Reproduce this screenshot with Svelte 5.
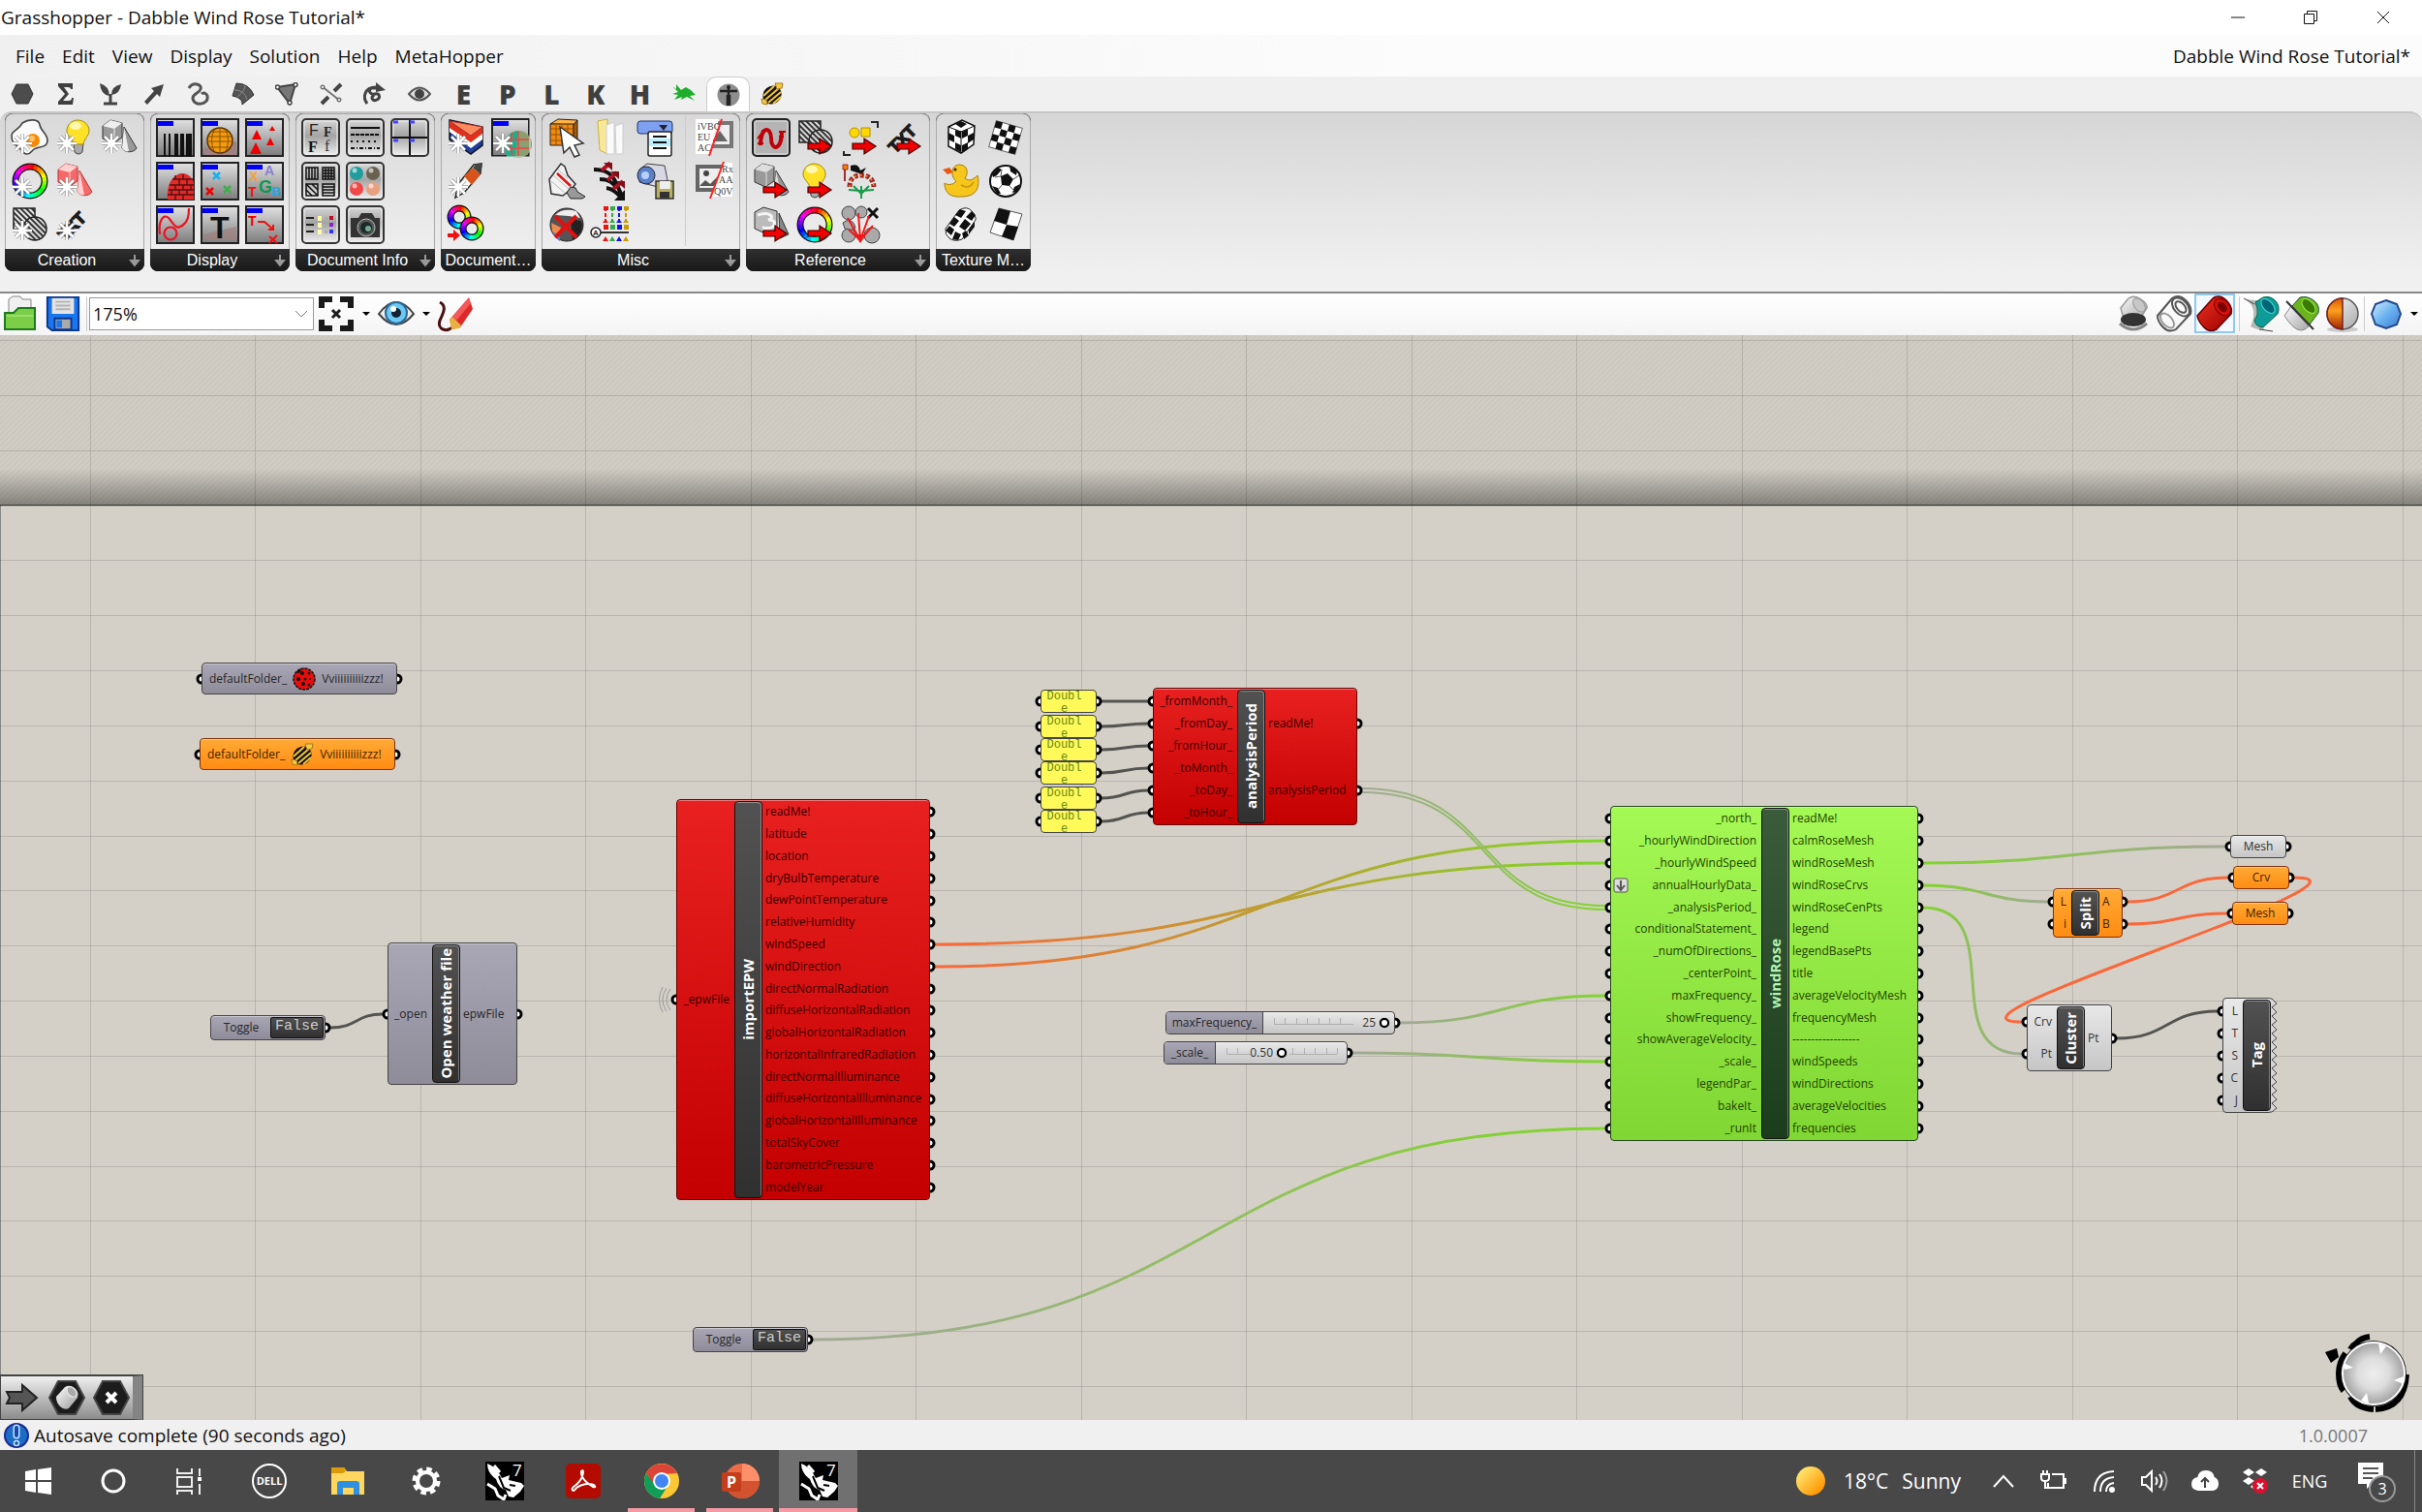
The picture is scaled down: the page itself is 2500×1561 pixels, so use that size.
<script>
	const tabs = [
		'hex', 'sigma', 'plant', 'arrow', 'curve', 'surface', 'mesh', 'intersect', 'transform', 'eye',
		'E', 'P', 'L', 'K', 'H', 'hopper', 'man', 'bee'
	];
	const menus = ['File', 'Edit', 'View', 'Display', 'Solution', 'Help', 'MetaHopper'];

	// shared bits of the ribbon icons, all on a 40 x 40 grid
	const sparkRays = 'M12 16v20M2 26h20M5 19l14 14M19 19L5 33';
	const spark = `<path d="${sparkRays}" stroke="#555" stroke-width="4" opacity=".6"/><path d="${sparkRays}" stroke="#fff" stroke-width="2.6"/>`;
	const redArrow =
		'<path d="M12 26h12v-5l12 8-12 8v-5H12z" fill="#f00000" stroke="#400" stroke-width="1.2"/>';
	const frame =
		'<rect x="1" y="1" width="38" height="38" fill="url(#gFrame)" stroke="#222" stroke-width="2"/><rect x="2" y="3" width="16" height="5" fill="#0000f8"/>';
	const round =
		'<rect x="1" y="1" width="38" height="38" rx="4" fill="url(#gRound)" stroke="#333" stroke-width="2"/><rect x="3" y="3" width="34" height="34" rx="2" fill="none" stroke="#eee"/>';

	function solids(light, mid, dark) {
		return `<path d="M25 9l13 22c-3 5-12 5-15 0z" fill="${mid}" stroke="${dark}"/><path d="M25 9l-2 22c2 3 5 4 7 3z" fill="${light}"/><path d="M3 8l8-6 12 3v15l-9 6-11-5z" fill="${mid}" stroke="${dark}"/><path d="M3 8l8-6 12 3-8 6z" fill="${light}"/><path d="M15 11v14" stroke="${light}"/>`;
	}

	function ring(cx, cy, r) {
		let out = `<circle cx="${cx}" cy="${cy}" r="${r}" fill="none" stroke="#111" stroke-width="7"/>`;
		for (let a = 0; a < 360; a += 15) {
			const p = [a, a + 17].map((d) => {
				const t = (d * Math.PI) / 180;
				return `${(cx + r * Math.sin(t)).toFixed(2)} ${(cy - r * Math.cos(t)).toFixed(2)}`;
			});
			out += `<path d="M${p[0]}A${r} ${r} 0 0 1 ${p[1]}" fill="none" stroke="hsl(${a},100%,50%)" stroke-width="4.4"/>`;
		}
		return out;
	}

	function txt(x, y, size, color, s, extra = '') {
		return `<text x="${x}" y="${y}" font-size="${size}" fill="${color}" ${extra}>${s}</text>`;
	}

	const bold = 'font-weight="bold" font-family="Liberation Sans"';
	const serif = 'font-family="Liberation Serif"';
	const bulb =
		'<path d="M14 26h10l-1 9q-4 4-8 0z" fill="#aaa" stroke="#444"/><path d="M18 2c7 0 12 5 12 11 0 5-5 8-6 14H14C13 21 7 18 7 13 7 7 12 2 18 2z" fill="#ffe227" stroke="#a08a10"/><ellipse cx="16" cy="8" rx="6" ry="4" fill="#fff8b0"/>';
	const hatch =
		'<path d="M3 3h22v22H3z" fill="url(#hatch)" stroke="#222" stroke-width="1.5"/><circle cx="25" cy="24" r="12" fill="#ddd"/><circle cx="25" cy="24" r="12" fill="url(#hatch)" stroke="#222" stroke-width="1.5"/>';
	const textIcon = `<g transform="rotate(-45 20 20)">${txt(1, 25, 17, '#1a1a1a', 'TXT', 'stroke="#1a1a1a" stroke-width="1.4" ' + bold)}</g>`;
	const soccer =
		'<circle cx="20" cy="20" r="16" fill="#fff" stroke="#111" stroke-width="2"/><path d="M15 15l7-3 6 6-4 7-8-1zM6 13l6-7 4 2-5 6-4 2zM24 4l8 5-1 5-6-4zM35 23l-3 8-5 1 2-6zM6 25l6 2 3 6-4 0z" fill="#111"/><path d="M16 8l-1 7M28 18l6-4M24 25l5 5M16 24l-4 5M15 15l-6 1" stroke="#555"/>';

	const icons = {
		egg: `<path d="M12 5c6-4 17-5 18 2 1 6 8 9 8 16 0 9-12 5-16 11-5 6-9 2-12-2-5-5-9-6-9-14 0-5 8-6 11-13z" fill="#fafafa" stroke="#444" stroke-width="1.6"/><circle cx="23" cy="23" r="7" fill="#f58a08"/><circle cx="22" cy="21" r="3" fill="#ffc46a"/>${spark}`,
		bulb: `<g transform="translate(5 0)">${bulb}</g>${spark}`,
		solids: solids('#eee', '#999', '#333') + spark,
		wheel: ring(20, 20, 15) + spark,
		redSolids: solids('#ffd0d0', '#f46a6a', '#b33') + spark,
		hatch: hatch + spark,
		text: textIcon + spark,
		bars: frame + '<path d="M9 16v24M14 16v24" stroke="#111" stroke-width="2"/><path d="M21 16v24M27 16v24" stroke="#111" stroke-width="4"/><path d="M34 16v24" stroke="#111" stroke-width="6"/>',
		globe: frame + '<path d="M3 32l34-8v14H5z" fill="#a08080"/><circle cx="20" cy="23" r="13" fill="#f29a10" stroke="#5a3300" stroke-width="1.5"/><path d="M8 19h24M7 24h26M10 30h20M20 10v26M14 12q-5 11 0 22M26 12q5 11 0 22M11 14h18" stroke="#8a5200" fill="none"/>',
		triangles: frame + '<path d="M12 12l5 10H7zM28 8l3 5h-6zM26 20l4 8h-8zM11 25l6 12H5z" fill="#e00"/>',
		brick: frame + '<path d="M12 39c-2-18 8-27 15-27 7 0 11 6 12 10v17z" fill="#e22a2a"/><path d="M14 24h25M13 29h26M12 34h27M17 18h22M20 14v4M28 13v5M24 18v6M32 18v6M20 24v5M28 24v5M36 24v5M16 29v5M24 29v5M32 29v5M20 34v5M28 34v5" stroke="#511" stroke-width="1.4"/>',
		crosses: frame + '<g fill="none" stroke-width="2.5"><path d="M13 11l7 7M20 11l-7 7" stroke="#1ab0f0"/><path d="M6 27l7 7M13 27l-7 7" stroke="#e00"/><path d="M24 25l7 7M31 25l-7 7" stroke="#3cb04c"/></g>',
		letters: frame + txt(4, 20, 14, '#f0a040', 'X', bold) + txt(20, 14, 14, '#8a80d0', 'A', bold) + txt(14, 32, 18, '#0a9850', 'G', bold) + txt(3, 36, 14, '#e11', 'T', bold) + txt(27, 35, 13, '#20a8e8', 'B', bold),
		loops: frame + '<path d="M4 30C2 16 8 8 13 13c5 5 7 13 14 8 6-4 7-10 7-18" stroke="#e12" stroke-width="2.2" fill="none"/><circle cx="15" cy="29" r="6.5" stroke="#e12" stroke-width="2.2" fill="none"/>',
		bigT: frame + '<path d="M3 30l34-8v14H5z" fill="#a08080" opacity=".7"/>' + txt(10, 34, 32, '#111', 'T', bold),
		tagX: frame + txt(3, 21, 14, '#e00', 'T', bold) + '<path d="M13 17h7l8 7M25 32l8 7M33 31l-8 8M29 20v5h-5" stroke="#e11" stroke-width="2" fill="none"/>',
		fonts: round + txt(8, 18, 16, '#222', 'F', 'font-family="Liberation Sans"') + txt(23, 19, 14, '#222', 'F', serif + ' font-weight="bold"') + txt(7, 35, 16, '#111', 'F', serif + ' font-weight="bold"') + txt(24, 34, 16, '#333', 'f', serif),
		lines: round + '<g stroke="#111" stroke-width="2"><path d="M5 10h30"/><path d="M5 17h30" stroke-dasharray="4 1"/><path d="M5 24h30" stroke-dasharray="2 4"/><path d="M5 31h30" stroke-dasharray="4 2 1 2"/></g>',
		cross: round + '<path d="M20 2v36M2 20h36" stroke="#111" stroke-width="2"/><path d="M3 4h5M20 4h5M3 23h5M20 23h5" stroke="#44f" stroke-width="3"/>',
		patterns: round + '<g stroke="#111" stroke-width="1.5" fill="none"><path d="M5 6h12v12H5zM22 6h12v12H22zM5 23h12v12H5zM22 23h12v12H22z"/><path d="M8 6v12M11 6v12M14 6v12M25 6v12M28 6v12M31 6v12M22 9h12M22 12h12M22 15h12M22 26h12M22 29h12M22 32h12M5 29l6 6M5 23l12 12M11 23l6 6"/></g>',
		spheres: round + '<circle cx="11" cy="12" r="7" fill="#1f9c9c"/><circle cx="28" cy="12" r="7" fill="#6a6250"/><circle cx="11" cy="28" r="7" fill="#f04848"/><circle cx="28" cy="28" r="7" fill="#e8a080"/><g fill="#fff" opacity=".6"><circle cx="9" cy="9" r="2.5"/><circle cx="26" cy="9" r="2.5"/><circle cx="9" cy="25" r="2.5"/><circle cx="26" cy="25" r="2.5"/></g>',
		layers: round + '<path d="M5 13h8M5 20h8M5 27h8" stroke="#222" stroke-width="2"/><path d="M17 11h4v5h-4zM17 18h4v5h-4zM17 25h4v5h-4z" fill="#fffca8"/><path d="M24 12h3v3h-3zM24 19h3v3h-3zM24 26h3v3h-3z" fill="#aaa"/><path d="M29 11h4v4h-4z" fill="#b12"/><path d="M29 18h4v4h-4z" fill="#82c"/><path d="M29 25h4v4h-4z" fill="#33f"/>',
		camera: round + '<path d="M5 13h8l3-5h11l3 5h5v20H5z" fill="#333"/><circle cx="21" cy="23" r="9" fill="#555" stroke="#bbb"/><circle cx="21" cy="23" r="6" fill="#1a2a2a"/><circle cx="23" cy="24" r="3" fill="#78a890"/>',
		cake: '<path d="M3 2v20l22 15 12-9V9z" fill="#1f3f98" stroke="#112" stroke-width="1.5"/><path d="M3 14l22 17 12-9v-7L25 24 3 8z" fill="#fff"/><path d="M3 3v7l22 15 12-9V9l-12 9z" fill="#e0301c"/><path d="M3 3l34 6-12 9z" fill="#ff8a5c" stroke="#a33"/>' + spark,
		frameSphere: frame + '<circle cx="28" cy="27" r="14" fill="#8aa070"/><path d="M14 30c0-10 6-16 14-17l-3 27H16z" fill="#1fae8c"/><path d="M16 22h23M28 13v26M22 15q-4 12 0 24M15 31h24" stroke="#e44" fill="none" stroke-width="1.5"/>' + '<path d="M40 0v40H0" stroke="#ddd" stroke-width="1"/>' + spark,
		pencil: '<path d="M9 37l3-14L28 3l8-1-1 10-17 20z" fill="#fff" stroke="#222" stroke-width="1.500"/><path d="M18 15l9-9 8 7-9 11z" fill="#d8541a"/><path d="M27 6l4-4 6-1-2 12z" fill="#444"/>' + spark,
		rings: ring(13, 12, 9) + ring(26, 24, 9) + '<path d="M1 29h6v-4l7 6-7 6v-4H1z" fill="#f01010"/>',
		pick: '<path d="M3 6l8-5 20 1-4 5z" fill="#ffb347" stroke="#222"/><path d="M3 6h24v22H3z" fill="#f08a10" stroke="#222"/><path d="M27 7l4-5v22l-4 4z" fill="#a85a00" stroke="#222"/><path d="M3 11h24M3 17h24M3 23h24M9 6v22M15 6v22M21 6v22" stroke="#9a5200"/><path d="M13 9l24 17-9 2 5 10-5 2-5-10-6 6z" fill="#fff" stroke="#333" stroke-width="1.5"/>',
		folder: '<path d="M6 3l10-2v36l-8-4z" fill="#f8e898" stroke="#c8b040"/><path d="M15 7l8-3v33h-8zM24 8l8-3v32h-7z" fill="#fafafa" stroke="#ccc"/>',
		script: '<rect x="1" y="3" width="36" height="13" rx="3" fill="#7ea0f0" stroke="#236"/><rect x="12" y="14" width="24" height="25" rx="2" fill="#fff" stroke="#222" stroke-width="1.5"/><path d="M13 21h22v8H13z" fill="#b8f0ff"/><path d="M17 19h14M17 25h14M17 31h14" stroke="#111" stroke-width="2"/><path d="M23 7h9l-4 6z" fill="#223"/>',
		codeA: '<path d="M13 5h24v24H13z" fill="#eee" stroke="#777" stroke-width="4"/><path d="M17 24l8-11 8 11z" fill="#666"/><path d="M0 1h24L14 37H0z" fill="#fff"/>' + txt(2, 12, 10, '#444', 'iVBC', serif) + txt(2, 23, 10, '#444', 'EU', serif) + txt(2, 34, 10, '#444', 'AC', serif) + '<path d="M27 1L14 39" stroke="#f22" stroke-width="2"/>',
		paper: '<path d="M2 18L14 2l4 3 3 9 8 9-4 5-9 7-12-2z" fill="#f2f2f2" stroke="#333" stroke-width="1.5"/><path d="M6 14l16 14M4 20l14 12M11 8l10 9" stroke="#bbb"/><path d="M10 12l14 13" stroke="#d11" stroke-width="2.5"/><path d="M20 32l4-6 5 1 2 4 8 5-3 2H24z" fill="#999" stroke="#222"/>',
		branch: '<path d="M2 8c12 0 18 4 22 12s5 12 8 17M8 18c10 0 14 4 17 9M15 27q8 1 16 11" stroke="#111" stroke-width="4" fill="none"/><path d="M10 9l9-8M16 19l10-8M22 28l10-8" stroke="#b01020" stroke-width="4"/><path d="M12 1h9v8zM19 10h9v8zM25 20h9v8z" fill="#801018"/><path d="M34 29v11H23z" fill="#111"/>',
		photo: '<path d="M3 8l8-6 18 2 3 15-10 7-19-5z" fill="#d8d8e4" stroke="#444"/><circle cx="10" cy="14" r="9" fill="#5a80c8" stroke="#223"/><circle cx="9" cy="14" r="4" fill="#b8d0ff"/><path d="M20 20h18v18H20z" fill="#b8b060" stroke="#333" stroke-width="1.5"/><path d="M24 20h11v8H24z" fill="#eee"/><path d="M24 31h10v7H24z" fill="#333"/>',
		codeB: '<path d="M2 5h26v24H2z" fill="#eee" stroke="#666" stroke-width="4"/><path d="M4 25l6-6 5 4 8-8v10z" fill="#555"/><circle cx="11" cy="12" r="3" fill="#444"/><path d="M28 1h10v35H16z" fill="#fff"/>' + txt(27, 11, 10, '#444', 'Rx', serif) + txt(24, 22, 10, '#444', 'AA', serif) + txt(19, 34, 10, '#444', 'Q0V', serif) + '<path d="M29 0L15 38" stroke="#f22" stroke-width="2"/>',
		ballX: '<circle cx="20" cy="20" r="17" fill="#555" stroke="#222"/><path d="M8 10q8-8 22-4l4 7-12-2z" fill="#eee"/><path d="M24 14l11 2q4 12-9 20z" fill="#222"/><path d="M4 18l10 5-3 9-6-5z" fill="#f08a50"/><path d="M5 27l8 6 0 4q-6-4-8-10z" fill="#4a80d0"/><path d="M8 11l22 22M30 11L8 33" stroke="#e01010" stroke-width="4"/>',
		ruler: '<g stroke-width="2" fill="none"><path d="M14 2v16" stroke="#e11" stroke-dasharray="4 2"/><path d="M21 2v16" stroke="#3a4" stroke-dasharray="4 2"/><path d="M28 2v16" stroke="#11e" stroke-dasharray="4 2"/><path d="M35 2v16" stroke="#c90" stroke-dasharray="4 2"/></g><path d="M12 1h5v4h-5zM12 20h5v5h-5zM14 32l3 5h-6zM14 14l3 4h-6z" fill="#e11"/><path d="M19 1h5v4h-5zM19 20h5v5h-5zM21 32l3 5h-6zM21 14l3 4h-6z" fill="#3a4"/><path d="M26 1h5v4h-5zM26 20h5v5h-5zM28 32l3 5h-6zM28 14l3 4h-6z" fill="#11e"/><path d="M33 1h5v4h-5zM33 20h5v5h-5zM35 32l3 5h-6zM35 14l3 4h-6z" fill="#c90"/><path d="M8 28h30" stroke="#333" stroke-width="2"/><circle cx="4" cy="28" r="5" fill="#fff" stroke="#222" stroke-width="1.5"/>' + txt(1, 31, 8, '#222', 'A', bold),
		snake: '<rect x="1" y="1" width="38" height="38" rx="4" fill="#b4b4b4" stroke="#222" stroke-width="2"/><rect x="3" y="3" width="34" height="34" rx="2" fill="none" stroke="#ddd"/><path d="M9 28c0-20 11-20 11-7s11 13 11-8" stroke="#c00008" stroke-width="4" fill="none"/><path d="M6 21l3-4M6 26h6M28 14h7M33 19h-5M10 13h5" stroke="#c00008" stroke-width="2"/>',
		hatchRef: hatch + redArrow,
		dotsRef: '<path d="M31 4h7v6M3 34v4h7" stroke="#222" stroke-width="2" fill="none"/><circle cx="14" cy="15" r="5" fill="#ffd800" stroke="#b09000"/><path d="M21 10h9v9h-9z" fill="#ffd800" stroke="#b09000"/>' + redArrow,
		textRef: textIcon + redArrow,
		solidsRef: solids('#ddd', '#999', '#333') + redArrow,
		bulbRef: bulb + redArrow,
		tree: '<path d="M4 6v14" stroke="#933" stroke-width="2"/><path d="M2 3h5v5H2z" fill="#e80" stroke="#a22"/><path d="M10 4q8-3 10 5l6-3-4 7-12-4z" fill="#111"/><path d="M21 38V25M21 33l-8-8M21 33l8-8M21 30l-13-1M21 30l13-1" stroke="#1a9a4a" stroke-width="2"/><path d="M9 26q0-12 12-12t13 12" fill="none" stroke="#a02020" stroke-width="5" stroke-dasharray="4 2"/><path d="M9 26q0-12 12-12t13 12" fill="none" stroke="#f0a020" stroke-width="1.5" stroke-dasharray="2 4"/>',
		clayRef: '<path d="M28 8l10 22-9 4z" fill="#888" stroke="#333"/><path d="M3 7l9-5 14 4v18l-10 6-13-6z" fill="#bbb" stroke="#333"/><path d="M6 10q9-3 13 0t-2 5q8 0 6 5t-12 3" fill="none" stroke="#f4f4f4" stroke-width="3"/>' + redArrow,
		wheelRef: ring(19, 20, 15) + redArrow,
		burst: '<g fill="#aaa" stroke="#444"><circle cx="8" cy="8" r="7"/><circle cx="32" cy="31" r="8"/><circle cx="8" cy="31" r="7"/><circle cx="21" cy="7" r="6"/><path d="M2 18q8-6 12 2t-10 4z"/></g><path d="M28 3l10 10M38 3L28 13" stroke="#111" stroke-width="3"/><path d="M20 36L7 13M20 36l-2-28M20 36l9-25M20 36l13-15M20 36L8 25" stroke="#f01818" stroke-width="2" fill="none"/><path d="M14 30h12l-6 9z" fill="#f01818"/>',
		cubeTex: '<path d="M7 9l14-7 13 6-1 19-13 9L7 29z" fill="#fff" stroke="#111" stroke-width="1.5"/><path d="M20 13v23M7 9l13 5 14-6" stroke="#111"/><path d="M14 6l6-3 6 3-6 4zM7 15l6 3v7l-6-3zM14 12l6 2v7l-6-3zM21 14l6-3v7l-6 3zM27 18l6-3v7l-6 4zM14 25l6 3v7l-6-3zM21 28l6-3v7l-6 4z" fill="#111"/>',
		planeTex: '<g transform="rotate(16 20 20)"><rect x="6" y="6" width="28" height="28" fill="#fff" stroke="#666"/><path d="M6 6h7v7H6zM20 6h7v7h-7zM13 13h7v7h-7zM27 13h7v7h-7zM6 20h7v7H6zM20 20h7v7h-7zM13 27h7v7h-7zM27 27h7v7h-7z" fill="#111"/></g>',
		duck: '<path d="M3 22c4 3 10 1 12-2-5-3-7-16 3-17 9 0 10 9 6 14 5 4 9 1 13-3 3 12-1 22-16 22C10 37 3 33 3 22z" fill="#f6c61c" stroke="#a87e08"/><path d="M1 8l7-2 4 5-6 2z" fill="#e85a10"/><circle cx="14" cy="8" r="1.5" fill="#222"/><path d="M20 24q8 5 13-3" stroke="#c89808" fill="none" stroke-width="1.5"/>',
		soccer,
		cylTex: '<path d="M4 24L18 5q8-5 13 1t4 9L21 35q-8 3-13-1t-4-10z" fill="#fff" stroke="#222"/><path d="M14 10l5-6 6 2-5 7zM25 12l6-6 4 4-4 6zM8 19l5-7 5 4-5 6zM18 22l6-8 6 5-6 7zM4 26l4-5 5 4-3 6zM28 25l6-8v5l-6 8zM11 35l3-8 6 3-3 6zM21 29l4-3 3 5-5 4z" fill="#111"/>',
		cornerTex: '<path d="M13 3l24 6-9 27-24-8z" fill="#fff" stroke="#555"/><path d="M13 3l12 3-4 14-13-4zM21 20l12 2-5 14-12-4z" fill="#111"/>'
	};

	const panels = [
		{ name: 'Creation', more: true, groups: [{ cols: 3, items: ['egg', 'bulb', 'solids', 'wheel', 'redSolids', null, 'hatch', 'text'] }] },
		{ name: 'Display', more: true, groups: [{ cols: 3, items: ['bars', 'globe', 'triangles', 'brick', 'crosses', 'letters', 'loops', 'bigT', 'tagX'] }] },
		{ name: 'Document Info', more: true, groups: [{ cols: 3, items: ['fonts', 'lines', 'cross', 'patterns', 'spheres', null, 'layers', 'camera'] }] },
		{ name: 'Document…', groups: [{ cols: 2, items: ['cake', 'frameSphere', 'pencil', null, 'rings'] }] },
		{ name: 'Misc', more: true, groups: [
			{ cols: 3, items: ['pick', 'folder', 'script', 'paper', 'branch', 'photo', 'ballX', 'ruler'] },
			{ cols: 1, items: ['codeA', 'codeB'] }
		] },
		{ name: 'Reference', more: true, groups: [{ cols: 4, items: ['snake', 'hatchRef', 'dotsRef', 'textRef', 'solidsRef', 'bulbRef', 'tree', null, 'clayRef', 'wheelRef', 'burst'] }] },
		{ name: 'Texture M…', groups: [{ cols: 2, items: ['cubeTex', 'planeTex', 'duck', 'soccer', 'cylTex', 'cornerTex'] }] }
	];

	// components on the canvas
	const components = [
		{ id: 'open', name: 'Open weather file', color: 'grey', x: 400, y: 627, w: 134, h: 147, l: 44, ins: ['_open'], outs: ['epwFile'] },
		{
			id: 'epw', name: 'importEPW', color: 'red', x: 698, y: 479, w: 262, h: 414, l: 58,
			ins: ['_epwFile'],
			outs: [
				'readMe!', 'latitude', 'location', 'dryBulbTemperature', 'dewPointTemperature', 'relativeHumidity',
				'windSpeed', 'windDirection', 'directNormalRadiation', 'diffuseHorizontalRadiation',
				'globalHorizontalRadiation', 'horizontalInfraredRadiation', 'directNormalIlluminance',
				'diffuseHorizontalIlluminance', 'globalHorizontalIlluminance', 'totalSkyCover',
				'barometricPressure', 'modelYear'
			]
		},
		{
			id: 'period', name: 'analysisPeriod', color: 'red', x: 1190, y: 364, w: 211, h: 142, l: 85,
			ins: ['_fromMonth_', '_fromDay_', '_fromHour_', '_toMonth_', '_toDay_', '_toHour_'],
			outs: ['readMe!', 'analysisPeriod']
		},
		{
			id: 'rose', name: 'windRose', color: 'green', x: 1662, y: 486, w: 318, h: 346, l: 154, flatten: 3,
			ins: [
				'_north_', '_hourlyWindDirection', '_hourlyWindSpeed', 'annualHourlyData_', '_analysisPeriod_',
				'conditionalStatement_', '_numOfDirections_', '_centerPoint_', 'maxFrequency_', 'showFrequency_',
				'showAverageVelocity_', '_scale_', 'legendPar_', 'bakeIt_', '_runIt'
			],
			outs: [
				'readMe!', 'calmRoseMesh', 'windRoseMesh', 'windRoseCrvs', 'windRoseCenPts', 'legend',
				'legendBasePts', 'title', 'averageVelocityMesh', 'frequencyMesh', '------------------',
				'windSpeeds', 'windDirections', 'averageVelocities', 'frequencies'
			]
		},
		{ id: 'split', name: 'Split', color: 'orange', x: 2119, y: 571, w: 72, h: 51, l: 17, ins: ['L', 'i'], outs: ['A', 'B'] },
		{ id: 'cluster', name: 'Cluster', color: 'light', x: 2092, y: 691, w: 88, h: 69, l: 29, ins: ['Crv', 'Pt'], outs: ['Pt'] },
		{ id: 'tag', name: 'Tag', color: 'light', x: 2294, y: 684, w: 52, h: 119, l: 19, ragged: true, ins: ['L', 'T', 'S', 'C', 'J'], outs: [] }
	];

	const folders = [
		{ id: 'ladybug', color: 'grey', x: 208, y: 338, w: 202, h: 33 },
		{ id: 'honeybee', color: 'orange', x: 206, y: 416, w: 202, h: 33 }
	];

	const toggles = [
		{ id: 'toggleOpen', x: 217, y: 702, w: 119, h: 26 },
		{ id: 'toggleRun', x: 715, y: 1024, w: 119, h: 26 }
	];

	const params = [
		{ id: 'mesh1', name: 'Mesh', color: 'light', x: 2302, y: 516, w: 58, h: 24 },
		{ id: 'crv', name: 'Crv', color: 'orange', x: 2305, y: 548, w: 58, h: 24 },
		{ id: 'mesh2', name: 'Mesh', color: 'orange', x: 2304, y: 585, w: 58, h: 24 }
	];

	const sliders = [
		{ id: 'freq', name: 'maxFrequency_', x: 1203, y: 698, w: 237, h: 24, l: 100, min: 0, max: 25, step: 1, value: 25, text: '25' },
		{ id: 'scale', name: '_scale_', x: 1201, y: 729, w: 190, h: 24, l: 53, min: 0, max: 1, step: 0.01, value: 0.5, text: '0.50' }
	];

	const yellow = [366, 392, 416, 440, 466, 490].map((y, i) => ({ id: 'panel' + i, x: 1074, y, w: 58, h: 24 }));

	const ORANGE = '#fa683a';
	const GREEN = '#80d628';
	const FAINT = '#a2a898';
	const DARK = '#545450';

	const wires = [
		{ from: ['toggleOpen', 0], to: ['open', 0], a: DARK, b: DARK },
		...yellow.map((p, i) => ({ from: [p.id, 0], to: ['period', i], a: DARK, b: DARK })),
		{ from: ['epw', 6], to: ['rose', 2], a: ORANGE, b: GREEN },
		{ from: ['epw', 7], to: ['rose', 1], a: ORANGE, b: GREEN },
		{ from: ['period', 1], to: ['rose', 4], a: FAINT, b: GREEN, double: true },
		{ from: ['freq', 0], to: ['rose', 8], a: FAINT, b: GREEN },
		{ from: ['scale', 0], to: ['rose', 11], a: FAINT, b: GREEN },
		{ from: ['toggleRun', 0], to: ['rose', 14], a: FAINT, b: GREEN },
		{ from: ['rose', 2], to: ['mesh1', 0], a: GREEN, b: FAINT },
		{ from: ['rose', 3], to: ['split', 0], a: GREEN, b: FAINT },
		{ from: ['rose', 4], to: ['cluster', 1], a: GREEN, b: FAINT },
		{ from: ['split', 0], to: ['crv', 0], a: ORANGE, b: ORANGE },
		{ from: ['split', 1], to: ['mesh2', 0], a: ORANGE, b: ORANGE },
		{ from: ['crv', 0], to: ['cluster', 0], a: ORANGE, b: ORANGE },
		{ from: ['cluster', 0], to: ['tag', 0], a: DARK, b: DARK }
	];

	const all = [...components, ...folders, ...toggles, ...params, ...sliders, ...yellow];
	const byId = Object.fromEntries(all.map((n) => [n.id, n]));

	function portY(node, i, count) {
		return Math.round(node.y + 2 + ((node.h - 4) * (i + 0.5)) / count);
	}

	function gripsOf(node) {
		const hasInput = !node.id.startsWith('toggle') && !sliders.includes(node);
		const ins = node.ins ?? (hasInput ? [''] : []);
		const outs = node.outs ?? [''];
		return [
			...ins.map((_, i) => ({ x: node.x, y: portY(node, i, ins.length) })),
			...outs.map((_, i) => ({ x: node.x + node.w, y: portY(node, i, outs.length) }))
		];
	}

	const grips = all.flatMap(gripsOf);

	function layWire(wire) {
		const src = byId[wire.from[0]];
		const dst = byId[wire.to[0]];
		const x1 = src.x + src.w + 5;
		const y1 = portY(src, wire.from[1], (src.outs ?? ['']).length);
		const x2 = dst.x - 5;
		const y2 = portY(dst, wire.to[1], (dst.ins ?? ['']).length);
		const reach = x2 > x1 ? Math.hypot(x2 - x1, y2 - y1) / 2 : (x1 - x2) * 0.4;
		const path = (o) => `M${x1} ${y1 + o}C${x1 + reach} ${y1 + o} ${x2 - reach} ${y2 + o} ${x2} ${y2 + o}`;
		return { ...wire, x1, x2, paths: wire.double ? [path(-2), path(2)] : [path(0)] };
	}

	const laid = wires.map(layWire);

	// grid cells are 170.5 wide and a third of that high
	const columns = Array.from({ length: 30 }, (_, i) => 93 + Math.floor((i * 341) / 2));
	const rows = Array.from({ length: 40 }, (_, i) => 5 + Math.round((i * 341) / 6));

	const teeth = Array.from({ length: 27 }, (_, i) => `${i % 2 ? 6 : 1},${Math.round(1 + (i * 117) / 26)}`).join(' ');

	function box(n) {
		return `left:${n.x}px;top:${n.y}px;width:${n.w}px;height:${n.h}px`;
	}

	function fraction(s) {
		return (s.value - s.min) / (s.max - s.min);
	}

	function ticks(s) {
		const knob = 11 + fraction(s) * 114;
		return Array.from({ length: 11 }, (_, i) => 11 + Math.round(i * 11.4)).filter(
			(x) => x < knob - 34 || x > knob + 8
		);
	}

	const apps = [
		{ name: 'Start', icon: 'start', narrow: true },
		{ name: 'Cortana', icon: 'cortana', narrow: true },
		{ name: 'Task view', icon: 'taskview', narrow: true },
		{ name: 'Dell', icon: 'dell' },
		{ name: 'Explorer', icon: 'explorer' },
		{ name: 'Settings', icon: 'settings' },
		{ name: 'Rhino', icon: 'rhino' },
		{ name: 'Acrobat', icon: 'acrobat' },
		{ name: 'Chrome', icon: 'chrome', open: true },
		{ name: 'PowerPoint', icon: 'ppt', open: true },
		{ name: 'Rhino 7', icon: 'rhino', open: true, active: true }
	];
</script>

{#snippet bee()}
	<ellipse cx="12" cy="13" rx="10" ry="9" transform="rotate(-40 12 13)" fill="#111" />
	<path d="M3 14L14 4M5 18L19 6M8 21l13-11M13 22l8-7" stroke="#f2c63a" stroke-width="2" />
	<path d="M15 1l8 0-1 5-5 1zM1 17l5 1 1 5-5-1z" fill="#f4c94a" stroke="#a87c10" />
{/snippet}

<svg class="defs" aria-hidden="true">
	<defs>
		<linearGradient id="gFrame" x1="0" y1="0" x2="0" y2="1">
			<stop offset="0" stop-color="#e2e2e2" /><stop offset="1" stop-color="#7c7c7c" />
		</linearGradient>
		<linearGradient id="gRound" x1="0" y1="0" x2="0" y2="1">
			<stop offset="0" stop-color="#d8d8d8" /><stop offset=".45" stop-color="#a4a4a4" /><stop offset="1" stop-color="#f0f0f0" />
		</linearGradient>
		<linearGradient id="gHex" x1="0" y1="0" x2="1" y2="1">
			<stop offset="0" stop-color="#fff" /><stop offset="1" stop-color="#999" />
		</linearGradient>
		<linearGradient id="gSun" x1="0" y1="0" x2="1" y2="1">
			<stop offset=".2" stop-color="#ffe066" /><stop offset=".8" stop-color="#ff9a08" />
		</linearGradient>
		<linearGradient id="gBlue" x1="0" y1="0" x2="1" y2="1">
			<stop offset="0" stop-color="#d8f0ff" /><stop offset=".5" stop-color="#6cb4f0" /><stop offset="1" stop-color="#3a78d0" />
		</linearGradient>
		<linearGradient id="gRed" x1="0" y1="0" x2="1" y2="1">
			<stop offset="0" stop-color="#f03020" /><stop offset="1" stop-color="#900" />
		</linearGradient>
		<linearGradient id="gOrange" x1="0" y1="0" x2="0" y2="1">
			<stop offset="0" stop-color="#d85a00" /><stop offset=".4" stop-color="#ffa020" /><stop offset="1" stop-color="#a02000" />
		</linearGradient>
		<linearGradient id="gGrey" x1="0" y1="0" x2="1" y2="1">
			<stop offset="0" stop-color="#fafafa" /><stop offset="1" stop-color="#a8a8a8" />
		</linearGradient>
		<radialGradient id="gCompass">
			<stop offset="0" stop-color="#eee" /><stop offset=".5" stop-color="#ddd" /><stop offset="1" stop-color="#a2a2a2" />
		</radialGradient>
		<pattern id="hatch" width="4" height="4" patternUnits="userSpaceOnUse" patternTransform="rotate(-45)">
			<rect width="2" height="4" fill="#333" />
		</pattern>
		<pattern id="stripes" width="4" height="4" patternUnits="userSpaceOnUse" patternTransform="rotate(45)">
			<rect width="4" height="4" fill="#d1cdc4" />
			<rect width="2" height="4" fill="#cbc7be" />
		</pattern>
		<linearGradient id="gEdge" x1="0" y1="0" x2="0" y2="1">
			<stop offset="0" stop-color="#000" stop-opacity="0" /><stop offset="1" stop-color="#000" stop-opacity=".36" />
		</linearGradient>
	</defs>
</svg>

<div class="window">
	<header class="titlebar">
		<span>Grasshopper - Dabble Wind Rose Tutorial*</span>
		<div class="window-buttons">
			<button aria-label="Minimize"><svg width="16" height="16"><path d="M1 8h14" /></svg></button>
			<button aria-label="Restore">
				<svg width="16" height="16"><path d="M1.5 4.5h10v10h-10zM4.5 4v-2.5h10v10H12" /></svg>
			</button>
			<button aria-label="Close"><svg width="16" height="16"><path d="M2 2l12 12M14 2L2 14" /></svg></button>
		</div>
	</header>

	<nav class="menubar">
		{#each menus as menu}
			<button>{menu}</button>
		{/each}
		<span class="document">Dabble Wind Rose Tutorial*</span>
	</nav>

	<div class="tabs">
		{#each tabs as tab}
			<button class="tab" class:active={tab === 'man'} aria-label={tab.length > 1 ? tab : null}>
				{#if tab.length === 1}
					{tab}
				{:else}
					<svg viewBox="0 0 24 24" width="24" height="24" fill="none">
						{#if tab === 'hex'}
							<path d="M6 2h12l5 10-5 10H6L1 12z" fill="#4c4c4c" stroke="#333" />
						{:else if tab === 'sigma'}
							<path d="M4 1h15v6h-2q0-2-3-2h-4l5 7-6 7h6q3 0 3-3h2l-1 7H4v-3l7-8-7-8z" fill="#3f3f3f" />
						{:else if tab === 'plant'}
							<path d="M12 22V12M5 22h14" stroke="#444" stroke-width="3" />
							<path d="M1 1q10 3 10 13Q2 13 1 1zM23 2q-1 10-10 11 0-9 10-11z" fill="#444" />
						{:else if tab === 'arrow'}
							<path d="M2 20L12 9l-3-3 13-4-4 13-3-3L5 23z" fill="#444" />
						{:else if tab === 'curve'}
							<path d="M2 6c4-7 14-4 12 1-1 4-8 5-8 9 0 9 17 8 15-2-1-3-4-4-6-2" stroke="#555" stroke-width="3" />
						{:else if tab === 'surface'}
							<path d="M5 1q13 0 18 12L11 23q1-7-10-9z" fill="#555" stroke="#333" />
							<path d="M3 8q11 0 13 10M14 3q0 6-8 12" stroke="#888" />
						{:else if tab === 'mesh'}
							<path d="M2 5l19-3-6 20z" fill="#777" stroke="#444" stroke-width="2" />
							<g fill="#fff" stroke="#444" stroke-width="1.5"><circle cx="2.5" cy="5" r="2" /><circle cx="21" cy="2.5" r="2" /><circle cx="15" cy="21" r="2" /></g>
						{:else if tab === 'intersect'}
							<path d="M2 4l19 15" stroke="#777" stroke-width="2" />
							<path d="M2 22l7-7M15 9l7-7" stroke="#444" stroke-width="4" />
							<g fill="#ddd" stroke="#444"><circle cx="3" cy="5" r="2" /><circle cx="20" cy="18" r="2" /></g>
						{:else if tab === 'transform'}
							<path d="M4 22c-5-6-3-17 9-17M18 6H8c-3 3-1 7 4 6s6 4 2 6-7-2-3-5" stroke="#444" stroke-width="3" />
							<path d="M13 0l10 8-10 2z" fill="#444" />
						{:else if tab === 'eye'}
							<path d="M1 12q11-13 22 0-11 13-22 0z" fill="#ddd" stroke="#555" stroke-width="2" />
							<circle cx="12" cy="12" r="5" fill="#444" />
						{:else if tab === 'hopper'}
							<path d="M0 4l4 3V2l5 6 5-3 5 3 5 5-6 1 5 5-8-4-6 3 1-3-8 3 4-5-6-1 6-2z" fill="#1fae2c" />
						{:else if tab === 'man'}
							<circle cx="12" cy="12" r="11.5" fill="#8e8e8e" />
							<path d="M3 8h18M12 4v10M11 12v11M13 12v11" stroke="#222" stroke-width="2.5" />
							<circle cx="12" cy="4" r="2" fill="#222" />
						{:else}
							{@render bee()}
						{/if}
					</svg>
				{/if}
			</button>
		{/each}
	</div>

	<section class="ribbon">
		{#each panels as panel}
			<div class="group">
				<div class="tools">
					{#each panel.groups as group, g}
						{#if g > 0}<span class="divider"></span>{/if}
						<div class="grid" style="grid-template-columns: repeat({group.cols}, 46px)">
							{#each group.items as item}
								{#if item}
									<button aria-label={item}>
										<svg viewBox="0 0 40 40" width="40" height="40" fill="none">{@html icons[item]}</svg>
									</button>
								{:else}
									<span></span>
								{/if}
							{/each}
						</div>
					{/each}
				</div>
				<div class="caption" class:more={panel.more}>
					<span>{panel.name}</span>
					{#if panel.more}
						<button aria-label="More {panel.name}">
							<svg width="12" height="14"><path d="M6 1v9M2 7l4 5 4-5z" fill="#999" stroke="#999" stroke-width="2" /></svg>
						</button>
					{/if}
				</div>
			</div>
		{/each}
	</section>

	<div class="toolbar">
		<button class="tool" aria-label="Open">
			<svg viewBox="0 0 36 40" width="36" height="40">
				<path d="M6 22V5l4-3h8l2 3h9v20z" fill="#f0f0f0" stroke="#888" />
				<path d="M2 19h9l5-5h17v22H2z" fill="#7cce48" stroke="#1d7a1d" stroke-width="2" />
				<path d="M4 22h27" stroke="#b4f088" />
			</svg>
		</button>
		<button class="tool wide" aria-label="Save">
			<svg viewBox="0 0 40 40" width="38" height="38">
				<path d="M3 2h34v36H8l-5-4z" fill="#1876f0" stroke="#0c3488" stroke-width="2" />
				<path d="M8 3h24v17H8z" fill="#e4e4e4" />
				<path d="M12 7h16M12 11h16M12 15h16" stroke="#b4b4b4" stroke-width="2" />
				<path d="M11 25h18v12H11z" fill="#aaa" stroke="#0c3488" stroke-width="2" />
				<path d="M13 27h6v8h-6z" fill="#1876f0" />
			</svg>
		</button>
		<span class="rule"></span>
		<div class="zoom">
			<select aria-label="Zoom"><option>175%</option><option>100%</option></select>
			<svg width="14" height="8" aria-hidden="true"><path d="M1 1l6 6 6-6" fill="none" stroke="#777" /></svg>
		</div>
		<button class="tool" aria-label="Zoom extents">
			<svg viewBox="0 0 40 40" width="40" height="40" fill="none" stroke="#1a1a1a">
				<path d="M5 14V5h11M24 5h11v9M35 26v9H24M16 35H5v-9" stroke-width="6" />
				<path d="M16 16l8 8M24 16l-8 8" stroke-width="3" />
			</svg>
		</button>
		<span class="drop"></span>
		<button class="tool" aria-label="Named views">
			<svg viewBox="0 0 40 40" width="40" height="40">
				<path d="M2 20Q20-4 38 20 20 42 2 20z" fill="#eee" stroke="#444" stroke-width="2" />
				<circle cx="20" cy="19" r="11" fill="#6cc8f4" stroke="#2a6a98" stroke-width="2" />
				<circle cx="20" cy="19" r="5" fill="#123" />
				<circle cx="17" cy="15" r="3" fill="#fff" />
			</svg>
		</button>
		<span class="drop"></span>
		<button class="tool" aria-label="Sketch">
			<svg viewBox="0 0 40 40" width="40" height="40">
				<path d="M3 8c8 4 3 12 0 19-3 9 7 13 14 6" fill="none" stroke="#4a1010" stroke-width="3" />
				<path d="M13 26L33 3l4 12-13 19-8 2z" fill="#e02828" />
				<path d="M13 26l3-3 9 9-2 3-8 1z" fill="#e8b040" />
				<path d="M33 3L16 23l4 4L35 9z" fill="#ff7a7a" opacity=".6" />
			</svg>
		</button>

		<div class="previews">
			<button class="tool" aria-label="No preview">
				<svg viewBox="0 0 40 40" width="40" height="40">
					<path d="M7 14L15 4q6-4 13 1t6 9L27 25H10z" fill="url(#gGrey)" stroke="#999" stroke-width="1.5" />
					<ellipse cx="26" cy="11" rx="5" ry="8" fill="#c8c8c8" stroke="#999" transform="rotate(-40 26 11)" />
					<ellipse cx="20" cy="26" rx="13" ry="7" fill="#333" />
					<path d="M6 30q14 12 28 0" fill="none" stroke="#888" stroke-width="3" />
				</svg>
			</button>
			<button class="tool" aria-label="Wireframe preview">
				<svg viewBox="0 0 40 40" width="40" height="40" fill="none" stroke="#555" stroke-width="2">
					<path d="M3 22L18 4q7-5 14 2t5 14L22 36q-7 4-13-2T3 22z" />
					<ellipse cx="27" cy="13" rx="7" ry="11" transform="rotate(-42 27 13)" />
					<ellipse cx="27" cy="13" rx="4" ry="7" transform="rotate(-42 27 13)" />
					<ellipse cx="13" cy="27" rx="5" ry="9" stroke="#999" transform="rotate(-42 13 27)" />
				</svg>
			</button>
			<button class="tool selected" aria-label="Shaded preview">
				<svg viewBox="0 0 40 40" width="40" height="40">
					<path d="M2 22L18 4q7-5 14 2t5 14L22 36q-7 4-13-2T2 22z" fill="url(#gRed)" stroke="#600" stroke-width="1.5" />
					<ellipse cx="28" cy="13" rx="7" ry="10" transform="rotate(-42 28 13)" fill="#d8100c" stroke="#700" />
					<ellipse cx="28" cy="13" rx="4" ry="6" transform="rotate(-42 28 13)" fill="#780000" />
				</svg>
			</button>
			<span class="rule"></span>
			<button class="tool" aria-label="Selected preview">
				<svg viewBox="0 0 40 40" width="40" height="40">
					<path d="M3 5q8 4 9 12T9 33q5 3 15 4l-8-10V6z" fill="#777" opacity=".5" />
					<path d="M14 8l8-5q8-2 13 4t2 13L22 34q-7 0-9-7l3-6q1-6-2-13z" fill="#0f9c98" stroke="#064" />
					<ellipse cx="27" cy="12" rx="5" ry="9" transform="rotate(-42 27 12)" fill="#067" stroke="#4dd" />
					<path d="M2 4l11 6M18 36l14 2" stroke="#444" />
				</svg>
			</button>
			<button class="tool" aria-label="Document preview">
				<svg viewBox="0 0 40 40" width="40" height="40">
					<path d="M2 22l7-10 18 21q-6 6-12 3T2 22z" fill="url(#gGrey)" stroke="#888" />
					<path d="M10 12l8-9q7-2 14 3t5 13L28 31z" fill="#6cb41c" stroke="#254" />
					<ellipse cx="27" cy="12" rx="5" ry="9" transform="rotate(-42 27 12)" fill="#3c7a08" stroke="#9e4" />
					<path d="M4 7l28 29" stroke="#333" stroke-width="2" />
				</svg>
			</button>
			<button class="tool" aria-label="Preview quality">
				<svg viewBox="0 0 40 40" width="40" height="40">
					<ellipse cx="20" cy="36" rx="16" ry="3" fill="#ccc" />
					<circle cx="20" cy="20" r="16" fill="url(#gGrey)" stroke="#555" stroke-width="1.5" />
					<path d="M20 4a16 16 0 0 0 0 32z" fill="url(#gOrange)" stroke="#722" stroke-width="1.5" />
				</svg>
			</button>
			<span class="rule"></span>
			<button class="tool" aria-label="Canvas options">
				<svg viewBox="0 0 40 40" width="40" height="40">
					<path d="M20 6l11 4 4 10-4 11-11 4-11-4-4-11 4-10z" fill="url(#gBlue)" stroke="#23488c" stroke-width="2" />
				</svg>
			</button>
			<span class="drop"></span>
		</div>
	</div>

	<main class="canvas">
		<svg class="backdrop" width="100%" height="100%" aria-hidden="true">
			<rect width="100%" height="175" fill="url(#stripes)" />
			<g class="lines">
				{#each columns as x}
					<line x1={x} x2={x} y1="0" y2="100%" />
				{/each}
				{#each rows as y}
					<line x1="0" x2="100%" y1={y} y2={y} />
				{/each}
			</g>
			<rect y="138" width="100%" height="37" fill="url(#gEdge)" />
			<rect y="175" width="100%" height="1" fill="#333" />

			{#each laid as wire, i}
				<linearGradient id="wire{i}" gradientUnits="userSpaceOnUse" x1={wire.x1} x2={wire.x2} y1="0" y2="0">
					<stop offset="0" stop-color={wire.a} />
					<stop offset="1" stop-color={wire.b} />
				</linearGradient>
				{#each wire.paths as d}
					<path
						{d}
						fill="none"
						stroke={wire.a === wire.b ? wire.a : `url(#wire${i})`}
						stroke-width={wire.double ? 2 : 3}
					/>
				{/each}
			{/each}

			<g class="grips">
				{#each grips as grip}
					<circle cx={grip.x} cy={grip.y} r="4" />
				{/each}
			</g>
			<g class="wireless">
				<path d="M692 675q-8 11 0 22M688 674q-8 12 0 24M684 673q-7 13 0 26" />
			</g>
		</svg>

		{#each components as node}
			<div class="node component {node.color}" style="{box(node)};grid-template-columns:{node.l}px 29px 1fr">
				<div class="ports in">
					{#each node.ins as port, i}
						<span>
							{#if node.flatten === i}
								<svg class="flatten" width="16" height="16" aria-hidden="true">
									<rect x="1" y="1" width="14" height="14" rx="2" fill="#ddd" stroke="#555" />
									<path d="M8 3v9M4 8l4 5 4-5" fill="none" stroke="#555" stroke-width="2" />
								</svg>
							{/if}
							{port}
						</span>
					{/each}
				</div>
				<div class="core"><span>{node.name}</span></div>
				<div class="ports out">
					{#each node.outs as port}
						<span>{port}</span>
					{/each}
				</div>
				{#if node.ragged}
					<svg class="ragged" width="8" height="119" aria-hidden="true">
						<polyline points="0,1 {teeth} 0,118" fill="#d6d6d6" stroke="#444" />
					</svg>
				{/if}
			</div>
		{/each}

		{#each folders as node}
			<div class="node folder {node.color}" style={box(node)}>
				<span>defaultFolder_</span>
				<svg viewBox="0 0 24 24" width="24" height="24" fill="none">
					{#if node.id === 'ladybug'}
						<circle cx="12" cy="12" r="11" fill="#e80c0c" stroke="#111" stroke-width="1.5" stroke-dasharray="3 1" />
						<path d="M3 5l7-4-3 5z" fill="#111" />
						<g fill="#111">
							<circle cx="6" cy="12" r="2" /><circle cx="10" cy="6" r="2" /><circle cx="17" cy="6" r="1.5" />
							<circle cx="13" cy="12" r="1.5" /><circle cx="18" cy="12" r="1" /><circle cx="11" cy="17" r="2" />
							<circle cx="17" cy="18" r="1.5" />
						</g>
					{:else}
						{@render bee()}
					{/if}
				</svg>
				<span>Vviiiiiiiiiizzz!</span>
			</div>
		{/each}

		{#each toggles as node}
			<div class="node toggle grey" style={box(node)}>
				<span id={node.id}>Toggle</span>
				<button aria-labelledby={node.id}>False</button>
			</div>
		{/each}

		{#each params as node}
			<div class="node param {node.color}" style={box(node)}>{node.name}</div>
		{/each}

		{#each yellow as node}
			<div class="node panel" style={box(node)}>Doubl<br />e</div>
		{/each}

		{#each sliders as node}
			<div class="node slider light" style="{box(node)};grid-template-columns:{node.l}px 1fr">
				<label class="grey" for={node.id}>{node.name}</label>
				<div class="rail">
					<svg width="136" height="22" aria-hidden="true">
						{#each ticks(node) as x}
							<path d="M{x}.5 6v6" stroke="#b0b0b0" />
						{/each}
						<path d="M11 12.5h{fraction(node) * 114 - 32}" stroke="#b0b0b0" />
						{#if fraction(node) < 1}
							<path d="M{19 + fraction(node) * 114} 12.5H125" stroke="#b0b0b0" />
						{/if}
					</svg>
					<output for={node.id} style="width:{fraction(node) * 114 + 2}px">{node.text}</output>
					<input id={node.id} type="range" min={node.min} max={node.max} step={node.step} value={node.value} />
				</div>
			</div>
		{/each}

		<div class="dock">
			<button aria-label="Forward">
				<svg viewBox="0 0 38 38" width="38" height="38">
					<path d="M3 13h16V6l15 13-15 13v-7H3l3-6z" fill="#555" stroke="#222" stroke-width="2" />
				</svg>
			</button>
			<button aria-label="Preview">
				<svg viewBox="0 0 38 38" width="38" height="38">
					<path d="M10 2h18l9 17-9 17H10L1 19z" fill="#1c1c1c" stroke="#444" stroke-width="2" />
					<path d="M8 18l9-10q5-3 10 1t3 10l-9 11q-5 2-9-2t-4-10z" fill="url(#gHex)" />
					<ellipse cx="24" cy="13" rx="4" ry="6" transform="rotate(-40 24 13)" fill="#aaa" stroke="#eee" />
				</svg>
			</button>
			<button aria-label="Clear">
				<svg viewBox="0 0 38 38" width="38" height="38">
					<path d="M10 2h18l9 17-9 17H10L1 19z" fill="#1c1c1c" stroke="#444" stroke-width="2" />
					<path d="M14 14l10 10M24 14L14 24" stroke="#fff" stroke-width="4" />
				</svg>
			</button>
		</div>

		<svg class="compass" viewBox="0 0 92 84" width="92" height="84" aria-hidden="true">
			<g fill="none" stroke="#000" stroke-width="6">
				<path d="M28 17q2-4 6-6 5-6 14-7M23 21q-7 10-7 21 0 12 5 18M28 66q6 12 24 13M54 79q30-2 32-36" />
			</g>
			<path d="M2 20l12-4 2 9-8 6z" fill="#000" />
			<circle cx="52" cy="42" r="34" fill="#222" />
			<circle cx="52" cy="42" r="32" fill="url(#gCompass)" stroke="#fff" stroke-width="2" />
			<path d="M57 11l8 3-6 8zM21 31l10 5-9 2zM83 53l-10-4 10-4zM47 73l-8-3 6-8z" fill="#fff" />
		</svg>
	</main>

	<footer class="status">
		<svg viewBox="0 0 28 28" width="28" height="28" aria-hidden="true">
			<circle cx="14" cy="14" r="12" fill="#1c6cc8" stroke="#1a2a90" stroke-width="2" />
			<path d="M14 6v8" stroke="#bfe4ff" stroke-width="7" stroke-linecap="round" />
			<path d="M14 6v8" stroke="#1747a8" stroke-width="4" stroke-linecap="round" />
			<circle cx="14" cy="22" r="2.5" fill="#1747a8" stroke="#bfe4ff" stroke-width="1.5" />
		</svg>
		<span>Autosave complete (90 seconds ago)</span>
		<span class="version">1.0.0007</span>
	</footer>

	<div class="taskbar">
		{#each apps as app}
			<button class="app" class:narrow={app.narrow} class:open={app.open} class:active={app.active} aria-label={app.name}>
				<svg viewBox="0 0 40 40" width="40" height="40" fill="none">
					{#if app.icon === 'start'}
						<path d="M7 10l11-2v11H7zM20 8l14-2v13H20zM7 21h11v11L7 30zM20 21h14v13l-14-2z" fill="#fff" />
					{:else if app.icon === 'cortana'}
						<circle cx="20" cy="20" r="11" stroke="#fff" stroke-width="3" />
					{:else if app.icon === 'taskview'}
						<path d="M8 7v5h15V7M8 16h15v10H8zM8 34v-4h15v4M31 7v8M31 23v11" stroke="#eee" stroke-width="2" />
						<rect x="29" y="16" width="4" height="4" fill="#fff" />
					{:else if app.icon === 'dell'}
						<circle cx="20" cy="20" r="17" stroke="#fff" stroke-width="2" />
						<text x="20" y="24" text-anchor="middle" font-size="11" font-weight="bold" fill="#fff">DELL</text>
					{:else if app.icon === 'explorer'}
						<path d="M3 6h13l3 4h18v24H3z" fill="#ffd75e" />
						<path d="M3 6h13l2 4-3 2H3z" fill="#dc9a08" />
						<path d="M9 34V23q0-3 3-3h17q3 0 3 3v11h-6v-7H15v7z" fill="#2f8fe0" />
					{:else if app.icon === 'settings'}
						<circle cx="20" cy="20" r="12" stroke="#fff" stroke-width="5" stroke-dasharray="5.4 4" />
						<circle cx="20" cy="20" r="9" stroke="#fff" stroke-width="4" />
					{:else if app.icon === 'rhino'}
						<rect width="40" height="40" fill="#000" />
						<path d="M2 2q9 3 15 15l8-3-1 5 13 3 3 3-4 6-7 6-5-1-3-7q-7-1-10-11Q2 12 2 2z" fill="#fff" />
						<path d="M2 23l8 5 3 7 6 4 2-5" stroke="#fff" stroke-width="3" />
						<path d="M9 4l6 7" stroke="#fff" stroke-width="3" />
						<path d="M14 15l5 12 7 3M25 24l6 1" stroke="#000" stroke-width="2" />
						<text x="28" y="15" font-size="17" fill="#fff">7</text>
					{:else if app.icon === 'acrobat'}
						<rect x="2" y="2" width="36" height="36" rx="5" fill="#b30b00" />
						<path d="M10 30q-3-1 0-4 9-6 10-15 0-3-2-1-1 8 12 16 4 1 1-2-9-3-18 3-2 3-3 3z" stroke="#fff" stroke-width="2" />
					{:else if app.icon === 'chrome'}
						<circle cx="20" cy="20" r="18" fill="#fcc934" />
						<path d="M4 12a18 18 0 0 1 32 0l-16 1-8 12z" fill="#db4437" />
						<path d="M4 12a18 18 0 0 0 14 26l9-14-15-1z" fill="#0f9d58" />
						<circle cx="20" cy="20" r="9" fill="#fff" />
						<circle cx="20" cy="20" r="7" fill="#4285f4" />
					{:else}
						<circle cx="22" cy="20" r="18" fill="#ed6c47" />
						<path d="M22 2a18 18 0 0 1 18 18H22z" fill="#ff8f6b" />
						<path d="M4 20h36a18 18 0 0 1-36 0z" fill="#d35230" />
						<rect x="1" y="11" width="20" height="20" rx="2" fill="#c43e1c" />
						<text x="6" y="27" font-size="16" font-weight="bold" fill="#fff">P</text>
					{/if}
				</svg>
			</button>
		{/each}

		<div class="tray">
			<button class="weather">
				<svg width="30" height="32" aria-hidden="true"><circle cx="15" cy="16" r="15" fill="url(#gSun)" /></svg>
				<span>18°C</span>
				<span>Sunny</span>
			</button>
			<button aria-label="Show hidden icons">
				<svg width="26" height="24"><path d="M3 18L13 7l10 11" /></svg>
			</button>
			<button aria-label="Battery">
				<svg width="30" height="24">
					<path d="M13 5h12v14H9v-5M27 9v6M4 1v4M8 1v4M2 5h8v4q0 3-4 3t-4-3zM6 12v7h4" />
				</svg>
			</button>
			<button aria-label="Network">
				<svg width="26" height="26">
					<path d="M3 24Q3 4 23 3M9 24Q9 10 23 9M15 24q0-8 8-9" />
					<circle cx="21" cy="22" r="2" fill="#fff" />
				</svg>
			</button>
			<button aria-label="Volume">
				<svg width="30" height="24"><path d="M2 8h4l6-6v20l-6-6H2zM16 8q3 4 0 8M20 5q5 7 0 14" /><path d="M24 2q7 10 0 20" opacity=".5" /></svg>
			</button>
			<button aria-label="Cloud upload">
				<svg width="28" height="22">
					<path d="M7 20q-6-1-6-6t6-6q1-7 8-7t8 7q4 1 4 6t-5 6z" fill="#fff" />
					<path class="up" d="M14 18V9M10 12l4-4 4 4" />
				</svg>
			</button>
			<button aria-label="Dropbox">
				<svg width="28" height="28">
					<path d="M7 1l6 4-6 4-6-4zM20 1l6 4-6 4-6-4zM7 10l6 4-6 4-6-4zM13 16l5 3-5 4-4-3z" fill="#fff" stroke="none" />
					<circle cx="19" cy="19" r="8" fill="#d9102e" stroke="none" />
					<path d="M16 16l6 6M22 16l-6 6" />
				</svg>
			</button>
			<button class="lang">ENG</button>
			<button class="notes" aria-label="Notifications">
				<svg width="46" height="46">
					<path d="M4 4h26v22H18l-5 5v-5H4z" fill="#fff" stroke="none" />
					<path d="M9 10h16M9 15h16M9 20h10" stroke="#555" />
					<circle cx="29" cy="31" r="13" fill="#484848" stroke="#999" />
					<text x="29" y="37" text-anchor="middle" font-size="16" fill="#fff" stroke="none">3</text>
				</svg>
			</button>
		</div>
	</div>
</div>

<style>
	:global(body) {
		background: #f0f0f0;
	}

	.window {
		display: flex;
		flex-direction: column;
		min-height: 100vh;
		font-family: 'Open Sans', 'Noto Sans', sans-serif;
		font-size: 18px;
		color: #111;
	}

	button {
		margin: 0;
		padding: 0;
		border: 0;
		background: none;
		font: inherit;
		color: inherit;
	}

	svg {
		display: block;
		flex: none;
	}

	.defs {
		position: absolute;
		width: 0;
		height: 0;
	}

	.titlebar {
		display: flex;
		align-items: center;
		height: 36px;
		padding: 0 3px 0 1px;
		background: #fff;
		font-size: 19px;
	}

	.window-buttons {
		display: flex;
		margin-left: auto;
	}

	.window-buttons button {
		display: flex;
		justify-content: center;
		width: 75px;
	}

	.window-buttons svg {
		fill: none;
		stroke: #111;
	}

	.menubar {
		display: flex;
		align-items: center;
		gap: 18px;
		height: 43px;
		padding: 0 12px 0 16px;
		background: linear-gradient(90deg, #f0f0f0, #fcfcfc 60%);
		font-size: 19px;
	}

	.document {
		margin-left: auto;
	}

	.tabs {
		display: grid;
		grid-template-columns: repeat(18, 1fr);
		width: 820px;
		height: 36px;
	}

	.tab {
		display: flex;
		align-items: center;
		justify-content: center;
		border-radius: 10px 10px 0 0;
		font: 900 28px/36px 'Open Sans', sans-serif;
		color: #3f3f3f;
	}

	.tab.active {
		background: #fff;
		border: 1px solid #ccc;
		border-bottom: 0;
	}

	.ribbon {
		display: flex;
		align-items: flex-start;
		gap: 6px;
		box-sizing: border-box;
		height: 186px;
		padding: 0 5px;
		border-top: 2px solid #c6c6c6;
		border-radius: 12px 12px 0 0;
		background: linear-gradient(#d6d6d6, #f0f0f0 90%);
	}

	.group {
		border-radius: 8px;
		background: #1f1f1f;
		overflow: hidden;
	}

	.tools {
		display: flex;
		justify-content: center;
		box-sizing: border-box;
		height: 140px;
		padding: 1px 2px 3px;
		border: 1px solid #aaa;
		border-bottom: 0;
		border-radius: 8px 8px 0 0;
		background: linear-gradient(#d9d9d9, #eee);
	}

	.grid {
		display: grid;
		grid-template-rows: repeat(3, 1fr);
	}

	.grid button {
		display: flex;
		align-items: center;
		justify-content: center;
	}

	.grid svg {
		overflow: visible;
	}

	.divider {
		width: 1px;
		margin: 0 7px;
		background: #ccc;
	}

	.caption {
		display: flex;
		align-items: center;
		justify-content: center;
		box-sizing: border-box;
		height: 23px;
		background: linear-gradient(#303030, #181818);
		font: 16px/22px 'Liberation Sans', Arial, sans-serif;
		color: #fff;
	}

	.caption.more {
		padding-right: 4px;
	}

	.caption.more span {
		margin-left: auto;
	}

	.caption.more button {
		margin-left: auto;
	}

	.toolbar {
		display: flex;
		align-items: center;
		box-sizing: border-box;
		height: 45px;
		padding-bottom: 2px;
		border-top: 2px solid #888;
		background: linear-gradient(#fff, #f4f4f4);
	}

	.tool {
		display: flex;
		align-items: center;
		justify-content: center;
		box-sizing: border-box;
		width: 42px;
		height: 41px;
	}

	.tool.wide {
		width: 45px;
	}

	.tool.selected {
		margin-right: 3px;
		border: 2px solid #90c8f6;
		background: #f4f9ff;
	}

	.rule {
		width: 1px;
		height: 36px;
		margin: 0 2px;
		background: #ccc;
	}

	.zoom {
		position: relative;
		width: 232px;
		margin-right: 2px;
	}

	.zoom select {
		appearance: none;
		box-sizing: border-box;
		width: 100%;
		height: 34px;
		padding: 0 3px;
		border: 1px solid #999;
		border-radius: 0;
		background: #fff;
		font: inherit;
		color: inherit;
	}

	.zoom svg {
		position: absolute;
		top: 13px;
		right: 6px;
	}

	.drop {
		margin: 0 6px;
		border: 4px solid transparent;
		border-top-color: #000;
		border-bottom: 0;
	}

	.previews {
		display: flex;
		align-items: center;
		margin-left: auto;
	}

	.previews .rule {
		margin: 0 1px;
	}

	.previews .drop {
		margin: 0 4px;
	}

	.canvas {
		position: relative;
		flex: 1;
		min-height: 1080px;
		overflow: hidden;
		box-shadow: inset 1px 0 #888;
		background: #d4d0c8;
		font-size: 12px;
	}

	.backdrop {
		position: absolute;
		inset: 0;
	}

	.lines line {
		stroke: #000;
		stroke-opacity: 0.12;
		stroke-width: 1;
		shape-rendering: crispEdges;
	}

	.grips circle {
		fill: #fff;
		stroke: #000;
		stroke-width: 3px;
	}

	.wireless path {
		fill: none;
		stroke: #999;
	}

	.node {
		position: absolute;
		box-sizing: border-box;
		padding: 1px;
		border: 1px solid #444;
		border-radius: 4px;
		line-height: 16px;
		white-space: nowrap;
		box-shadow: inset 0 1px rgba(255, 255, 255, 0.4);
	}

	.grey {
		background: linear-gradient(#a9a7b5, #8e8c99);
		color: #26262a;
	}

	.light {
		background: linear-gradient(#e8e8e8, #c6c6c6);
		color: #333;
	}

	.red {
		border-color: #600;
		background: linear-gradient(#e82020, #c40000);
		color: #380000;
	}

	.green {
		border-color: #24481c;
		background: linear-gradient(#a4f954, #80d632);
		color: #224400;
	}

	.orange {
		border-color: #80300c;
		background: linear-gradient(#ffaa36, #ff8c12);
		color: #442200;
	}

	.component {
		display: grid;
	}

	.ports {
		display: grid;
		grid-auto-rows: 1fr;
		padding: 0 5px 0 3px;
	}

	.ports span {
		display: flex;
		align-items: center;
		min-height: 0;
	}

	.ports.in span {
		justify-content: flex-end;
	}

	.flatten {
		position: absolute;
		left: 2px;
	}

	.core {
		display: flex;
		align-items: center;
		justify-content: center;
		box-sizing: border-box;
		padding-right: 2px;
		border: 1px solid #111;
		border-radius: 4px;
		background: linear-gradient(#525252, #303030);
		box-shadow: inset -1px 1px rgba(255, 255, 255, 0.35);
		font-size: 15px;
		font-weight: 700;
		color: #fff;
	}

	.core span {
		writing-mode: vertical-rl;
		transform: rotate(180deg);
	}

	.green .core {
		background: linear-gradient(#3a5c3a, #1b3d1b);
		color: #b4f5b4;
	}

	.ragged {
		position: absolute;
		top: -1px;
		right: -7px;
	}

	.folder {
		display: flex;
		align-items: center;
		gap: 6px;
		padding-left: 7px;
	}

	.toggle {
		display: flex;
	}

	.toggle span {
		flex: 1;
		line-height: 22px;
		text-align: center;
	}

	.toggle button {
		width: 55px;
		padding-bottom: 2px;
		border: 1px solid #111;
		border-radius: 2px;
		background: linear-gradient(#505050, #303030);
		font: 15px/18px 'Liberation Mono', 'Courier New', monospace;
		color: #ccc;
	}

	.param {
		line-height: 20px;
		text-align: center;
	}

	.panel {
		padding: 0 9px 0 0;
		overflow: hidden;
		background: #fffa5a;
		font: 12px/13px 'Liberation Mono', 'Courier New', monospace;
		text-align: center;
		color: #6a8a10;
		box-shadow: none;
	}

	.slider {
		display: grid;
		padding: 0;
	}

	.slider label {
		border-right: 1px solid #444;
		border-radius: 3px 0 0 3px;
		line-height: 22px;
		text-align: center;
	}

	.rail {
		position: relative;
	}

	.rail output {
		position: absolute;
		top: 0;
		left: 0;
		line-height: 22px;
		text-align: right;
	}

	.rail input {
		position: absolute;
		top: 0;
		left: 6px;
		appearance: none;
		width: 124px;
		height: 22px;
		margin: 0;
		background: none;
	}

	.rail input::-webkit-slider-thumb {
		appearance: none;
		box-sizing: border-box;
		width: 10px;
		height: 10px;
		border: 2px solid #000;
		border-radius: 50%;
		background: #fff;
		box-shadow: 0 0 1px #000;
	}

	.dock {
		position: absolute;
		bottom: 0;
		left: 0;
		display: flex;
		align-items: center;
		gap: 8px;
		box-sizing: border-box;
		height: 46px;
		padding: 0 3px;
		border: 1px solid #444;
		border-right: 10px solid #848484;
		background: linear-gradient(#f0f0f0, #8c8c8c);
		outline: 1px solid #444;
	}

	.compass {
		position: absolute;
		right: 10px;
		bottom: 6px;
	}

	.status {
		display: flex;
		align-items: center;
		gap: 4px;
		box-sizing: border-box;
		height: 31px;
		padding: 1px 56px 0 3px;
		font-size: 19px;
	}

	.version {
		margin-left: auto;
		font-size: 18px;
		color: #777;
	}

	.taskbar {
		display: flex;
		height: 64px;
		background: #484848;
		color: #fff;
	}

	.app {
		display: flex;
		align-items: center;
		justify-content: center;
		box-sizing: border-box;
		width: 81px;
	}

	.app.narrow {
		width: 78px;
	}

	.app.narrow + .app:not(.narrow) {
		margin-left: 3px;
	}

	.app.open {
		border-top: 4px solid transparent;
		border-bottom: 4px solid #f59aa4;
		background-clip: padding-box;
	}

	.app.open:not(.active) {
		width: 69px;
		margin: 0 6px;
	}

	.app.active {
		border-top-color: #707070;
		background: #707070;
	}

	.tray {
		display: flex;
		margin-left: auto;
		margin-right: 7px;
		border-right: 1px solid #888;
	}

	.tray button {
		display: flex;
		align-items: center;
		justify-content: center;
		width: 52px;
	}

	.tray svg {
		fill: none;
		stroke: #fff;
		stroke-width: 2px;
	}

	.tray .up {
		stroke: #444;
	}

	.tray .weather {
		gap: 14px;
		width: auto;
		margin-right: 18px;
		font-size: 21px;
	}

	.weather svg {
		margin-right: 5px;
		stroke: none;
	}

	.tray .lang {
		width: 60px;
	}

	.tray .notes {
		width: 78px;
	}
</style>
